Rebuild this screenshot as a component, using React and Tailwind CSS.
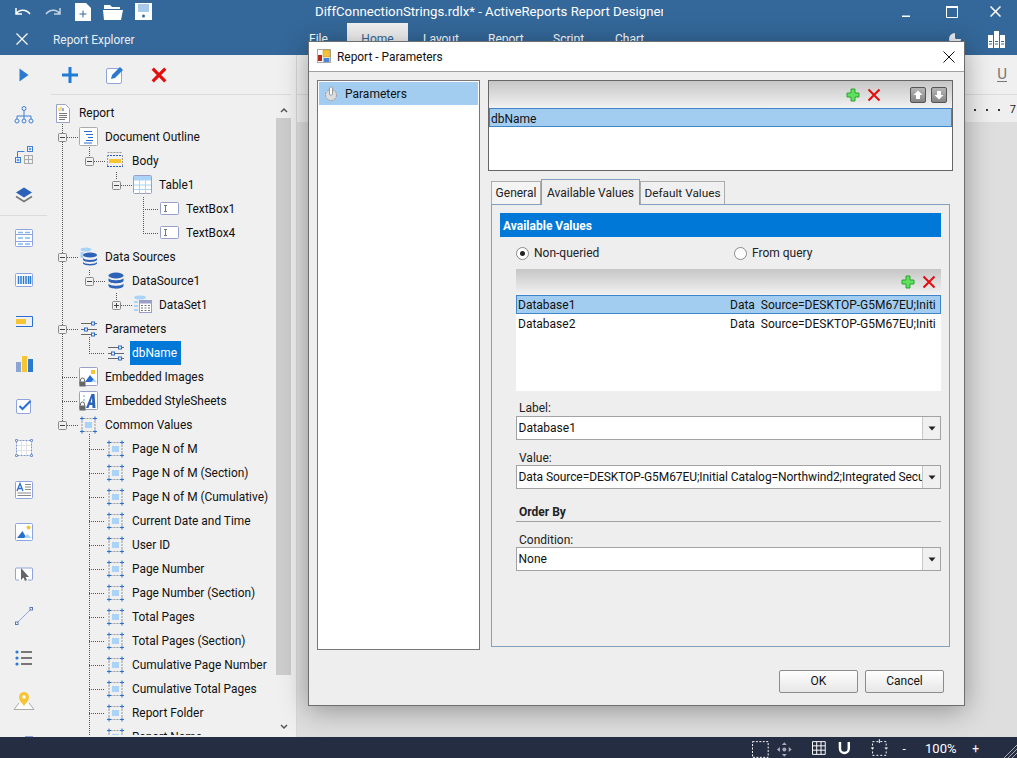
import React from 'react';

const FONT = 'font-["Roboto","Liberation_Sans",sans-serif]';

// tree data: level, label, icon
const TREE = [
  [0, 'Report', 'report'],
  [1, 'Document Outline', 'outline'],
  [2, 'Body', 'body'],
  [3, 'Table1', 'table'],
  [4, 'TextBox1', 'textbox'],
  [4, 'TextBox4', 'textbox'],
  [1, 'Data Sources', 'sources'],
  [2, 'DataSource1', 'db'],
  [3, 'DataSet1', 'dataset'],
  [1, 'Parameters', 'params'],
  [2, 'dbName', 'params', true],
  [1, 'Embedded Images', 'images'],
  [1, 'Embedded StyleSheets', 'sheets'],
  [1, 'Common Values', 'common'],
  [2, 'Page N of M', 'common'],
  [2, 'Page N of M (Section)', 'common'],
  [2, 'Page N of M (Cumulative)', 'common'],
  [2, 'Current Date and Time', 'common'],
  [2, 'User ID', 'common'],
  [2, 'Page Number', 'common'],
  [2, 'Page Number (Section)', 'common'],
  [2, 'Total Pages', 'common'],
  [2, 'Total Pages (Section)', 'common'],
  [2, 'Cumulative Page Number', 'common'],
  [2, 'Cumulative Total Pages', 'common'],
  [2, 'Report Folder', 'common'],
  [2, 'Report Name', 'common'],
];

const INDENT = ['pl-[6px]', 'pl-[32px]', 'pl-[59px]', 'pl-[86px]', 'pl-[113px]'];

function Lock() {
  return (
    <g>
      <path d="M1.5 14.5v-1.5a2 2 0 0 1 4 0v1.5" fill="none" stroke="#666" strokeWidth="1" />
      <rect x="0.5" y="14.5" width="6" height="5" fill="#666" />
    </g>
  );
}

function TreeIcon({ name }) {
  const common = { width: 20, height: 20, viewBox: '0 0 20 20' };
  switch (name) {
    case 'report':
      return (
        <svg {...common}>
          <path d="M3.5 1.5h9l4 4v14h-13z" fill="#fff" stroke="#9aa3c7" />
          <path d="M6 8V5M8 8V3.5" stroke="#f5c33b" strokeWidth="1.2" />
          <path d="M10 8V5" stroke="#3f7fd6" strokeWidth="1.2" />
          <path d="M6 10.5h8M6 12.5h8M6 14.5h8M6 16.5h6" stroke="#777" />
        </svg>
      );
    case 'outline':
      return (
        <svg {...common}>
          <rect x="0.5" y="0.5" width="18" height="18" rx="1" fill="#fff" stroke="#aaa" />
          <path d="M5 4.5h8M7 7.5h7M9 10.5h5M7 13.5h7M5 16h8" stroke="#2a6fd0" strokeWidth="1" />
        </svg>
      );
    case 'body':
      return (
        <svg {...common}>
          <path d="M1 4.5h16M1 15.5h16" stroke="#2a5fc0" strokeDasharray="2 1" />
          <path d="M1.5 1.5h15" stroke="#999" strokeDasharray="2 1" />
          <path d="M1.5 4v12M16.5 4v12" stroke="#999" strokeDasharray="2 1" />
          <rect x="3" y="8" width="12" height="4" fill="#f7c533" />
        </svg>
      );
    case 'table':
      return (
        <svg {...common}>
          <rect x="0.5" y="0.5" width="18" height="18" rx="1" fill="#fff" stroke="#9a9fc8" />
          <rect x="1" y="1" width="17" height="4.5" fill="#a9d3f7" />
          <path d="M1 10h17M1 14.5h17M6.5 5.5v13M12.5 5.5v13" stroke="#a9d3f7" />
        </svg>
      );
    case 'textbox':
      return (
        <svg {...common}>
          <rect x="0.5" y="3.5" width="18" height="12" rx="1" fill="#fff" stroke="#9a9fc8" />
          <path d="M4 6.5h3M4 12.5h3M5.5 6.5v6" stroke="#777" />
        </svg>
      );
    case 'db':
      return (
        <svg {...common}>
          <ellipse cx="10" cy="4.5" rx="7.5" ry="3" fill="#2c62b8" />
          <path d="M2.5 7c1 3 14 3 15 0v3c-1 3-14 3-15 0z" fill="#2c62b8" />
          <path d="M2.5 12.5c1 3 14 3 15 0v2.5c-1 3.5-14 3.5-15 0z" fill="#2c62b8" />
        </svg>
      );
    case 'sources':
      return (
        <svg {...common}>
          <ellipse cx="7" cy="2.5" rx="5.5" ry="2" fill="#a9d3f7" />
          <path d="M1.5 5v6h3V5z" fill="#a9d3f7" />
          <ellipse cx="11" cy="8" rx="7" ry="2.5" fill="#2c62b8" />
          <path d="M4 11c1 2.5 13 2.5 14 0v2c-1 2.5-13 2.5-14 0z" fill="#2c62b8" />
          <path d="M4 15c1 2.5 13 2.5 14 0v1.500c-1 2.500-13 2.500-14 0z" fill="#2c62b8" />
        </svg>
      );
    case 'dataset':
      return (
        <svg {...common}>
          <ellipse cx="7" cy="2.5" rx="6" ry="2" fill="#a9d3f7" />
          <path d="M1 6h4v2H1zM1 10h4v2H1zM1 14h4v2H1z" fill="#a9d3f7" />
          <rect x="6.500" y="5.500" width="12" height="12" fill="#fff" stroke="#9a9fc8" />
          <rect x="7" y="6" width="11" height="2.500" fill="#9a9fc8" />
          <path d="M8 10.500h2M11.500 10.500h2M15 10.500h2M8 13h2M11.500 13h2M15 13h2M8 15.500h2M11.500 15.500h2M15 15.500h2" stroke="#777" />
        </svg>
      );
    case 'params':
      return (
        <svg {...common}>
          <path d="M2 4.500h10M16 4.500h2M2 10.500h3M9 10.500h9M2 15.500h10M16 15.500h2" stroke="#666" strokeWidth="1" />
          <rect x="12.500" y="3" width="3" height="3" fill="none" stroke="#2a6fd0" />
          <rect x="5.500" y="9" width="3" height="3" fill="none" stroke="#2a6fd0" />
          <rect x="12.500" y="14" width="3" height="3" fill="none" stroke="#2a6fd0" />
        </svg>
      );
    case 'images':
      return (
        <svg {...common}>
          <rect x="0.500" y="0.500" width="18" height="18" rx="1" fill="#fff" stroke="#9a9fc8" />
          <rect x="12" y="3" width="4" height="4" fill="#f7c533" />
          <path d="M6 15l5-7 6 7z" fill="#2a6fd0" />
          <path d="M12 15l3-3 3 3z" fill="#a9d3f7" />
          <Lock />
        </svg>
      );
    case 'sheets':
      return (
        <svg {...common}>
          <rect x="0.500" y="0.500" width="18" height="18" rx="1" fill="#fff" stroke="#9a9fc8" />
          <rect x="4" y="4" width="2" height="2" fill="#a9d3f7" />
          <rect x="4" y="8" width="2" height="2" fill="#a9d3f7" />
          <path d="M7 17L12.500 3H15.500L16.500 17H13.500L13.300 14H10.600L9.500 17ZM11.500 11.500H13.200L13 6.500Z" fill="#2c62b8" />
          <Lock />
        </svg>
      );
    default:
      return (
        <svg {...common}>
          <path d="M4.500 3.500h10M4.500 16.500h10M3 6v8M16 6v8" stroke="#999" strokeDasharray="2 1" />
          <path d="M1 3.500h4M3 1.500v4M14 3.500h4M16 1.500v4M1 16.500h4M3 14.500v4M14 16.500h4M16 14.500v4" stroke="#2a6fd0" strokeWidth="1" />
          <rect x="6" y="7" width="7" height="6" fill="#a9d3f7" />
        </svg>
      );
  }
}

function Expander({ x, y, plus }) {
  return (
    <g>
      <rect x={x - 4} y={y - 4} width="8" height="8" rx="1" fill="#f0f0f0" stroke="#8a8a8a" />
      <path d={`M${x - 2.5} ${y}h5`} stroke="#444" />
      {plus && <path d={`M${x} ${y - 2.5}v5`} stroke="#444" />}
    </g>
  );
}

// dotted guide lines, drawn in page coordinates via the viewBox
function TreeLines() {
  const rowY = i => 113 + i * 24;
  const h = [
    [67, 78, 1], [67, 78, 6], [67, 78, 9], [67, 78, 13], [62, 78, 11], [62, 78, 12],
    [94, 105, 2], [94, 105, 7], [121, 132, 3], [121, 132, 8],
    [143, 159, 4], [143, 159, 5], [89, 105, 10],
    ...[14, 15, 16, 17, 18, 19, 20, 21, 22, 23, 24, 25, 26].map(i => [89, 105, i]),
  ];
  const v = [[62, 124, 425], [89, 147, 157], [89, 270, 276], [116, 172, 180], [116, 293, 300], [143, 197, 233], [89, 337, 353], [89, 434, 737]];
  return (
    <svg className="absolute left-0 top-0 pointer-events-none" width="229" height="640" viewBox="47 101 229 640">
      {h.map(([a, b, i]) => (
        <path key={`h${a}${i}`} d={`M${a} ${rowY(i) + 0.500}H${b}`} stroke="#555" strokeDasharray="1 1" />
      ))}
      {v.map(([x, a, b]) => (
        <path key={`v${x}${a}`} d={`M${x + 0.500} ${a}V${b}`} stroke="#555" strokeDasharray="1 1" />
      ))}
      {[[62, 137], [62, 257], [62, 329], [62, 425], [89, 161], [89, 281], [116, 185]].map(([x, y]) => (
        <Expander key={`${x}${y}`} x={x + 0.500} y={y + 0.500} />
      ))}
      <Expander x={116.500} y={305.500} plus />
    </svg>
  );
}

function Tree() {
  return (
    <div className="relative flex-1 overflow-hidden">
      <TreeLines />
      <div className="relative flex flex-col">
        {TREE.map(([level, label, icon, selected]) => (
          <div key={label} className={`flex h-6 shrink-0 items-center ${INDENT[level]}`}>
            <span className="flex w-[24px] shrink-0"><TreeIcon name={icon} /></span>
            <span className={`flex h-6 items-center whitespace-nowrap pl-[2px] pt-[2px] text-[11.9px] ${selected ? 'bg-[#0078d7] pr-[4px] text-white' : 'pr-[2px] text-[#111]'}`}>{label}</span>
          </div>
        ))}
      </div>
    </div>
  );
}

function Scrollbar() {
  return (
    <div className="flex w-[15px] shrink-0 flex-col bg-[#f0f0f0]">
      <div className="flex h-[17px] items-center justify-center">
        <svg width="8" height="6" viewBox="0 0 8 6"><path d="M1 5l3-3 3 3" fill="none" stroke="#555" strokeWidth="1.500" /></svg>
      </div>
      <div className="h-[557px] bg-[#cdcdcd]" />
      <div className="flex flex-1 items-end justify-center pb-[5px]">
        <svg width="8" height="6" viewBox="0 0 8 6"><path d="M1 1l3 3 3-3" fill="none" stroke="#555" strokeWidth="1.500" /></svg>
      </div>
    </div>
  );
}

const s = { fill: 'none', stroke: '#3f7fd6', strokeWidth: 1 };

const RAIL_ICONS = [
  <svg width="20" height="20" viewBox="0 0 20 20"><rect x="1.500" y="1.500" width="17" height="17" rx="1" fill="#fff" stroke="#8fa4dc" /><path d="M2 6.500h16M2 13.500h16" stroke="#8fa4dc" /><path d="M4 4.500h5M11 4.500h5M4 10h5M11 10h5M4 16h5M11 16h5" stroke="#7fb8ee" strokeWidth="1.500" /></svg>,
  <svg width="20" height="20" viewBox="0 0 20 20"><rect x="1.500" y="3.500" width="17" height="13" rx="1" fill="#fff" stroke="#8fa4dc" /><path d="M4.500 6v8M7 6v8M9.500 6v8M12 6v8M14.500 6v8M16.500 6v8" stroke="#2a7ad0" strokeWidth="1.500" /></svg>,
  <svg width="20" height="20" viewBox="0 0 20 20"><path d="M2 4.500h16.500v10H2" fill="none" stroke="#2a6fd0" /><rect x="2" y="7" width="10" height="5" fill="#f7c533" /></svg>,
  <svg width="20" height="20" viewBox="0 0 20 20"><rect x="2" y="8" width="5" height="10" fill="#8aa5d6" /><rect x="8" y="2" width="5" height="16" fill="#f7c533" /><rect x="14" y="5" width="5" height="13" fill="#2a7ad0" /></svg>,
  <svg width="20" height="20" viewBox="0 0 20 20"><rect x="2.500" y="3.500" width="14" height="14" rx="1.500" fill="#fff" stroke="#8fa4dc" /><path d="M5.500 10l3 3 8-8" fill="none" stroke="#2a6fd0" strokeWidth="2" /></svg>,
  <svg width="20" height="20" viewBox="0 0 20 20"><rect x="2.500" y="2.500" width="15" height="15" fill="#fff" stroke="#7b93d0" strokeDasharray="2 1" /><path d="M7.500 3v14M12.500 3v14M3 7.500h14M3 12.500h14" stroke="#e2e2e2" /><path d="M1.500 1.500h2v2h-2zM16.500 1.500h2v2h-2zM1.500 16.500h2v2h-2zM16.500 16.500h2v2h-2z" fill="#fff" stroke="#7b93d0" /></svg>,
  <svg width="20" height="20" viewBox="0 0 20 20"><rect x="1.500" y="1.500" width="17" height="17" rx="1" fill="#fff" stroke="#8fa4dc" /><path d="M3 11L6 3.500 9 11M4.200 8.500h3.600" fill="none" stroke="#2a6fd0" strokeWidth="1.300" /><path d="M11 4.500h6M11 7h6M11 9.500h6M3.500 13h13.500M3.500 15.500h13.500" stroke="#888" /></svg>,
  <svg width="20" height="20" viewBox="0 0 20 20"><rect x="1.500" y="1.500" width="17" height="17" rx="1" fill="#fff" stroke="#8fa4dc" /><circle cx="14.500" cy="5.500" r="2" fill="#f7c533" /><path d="M3 16l5.500-7 4 7z" fill="#2a6fd0" /><path d="M10 16l3.500-4 4 4z" fill="#a9d3f7" /></svg>,
  <svg width="20" height="20" viewBox="0 0 20 20"><path d="M5 16H2.500a1 1 0 0 1-1-1V5a1 1 0 0 1 1-1h15a1 1 0 0 1 1 1v10a1 1 0 0 1-1 1H14" fill="#fff" stroke="#8fa4dc" /><path d="M7 4v12l2.500-2.500L11 17l2-1-1.500-3H15z" fill="#666" /></svg>,
  <svg width="20" height="20" viewBox="0 0 20 20"><path d="M3.500 16.500L16.500 3.500" stroke="#8fa4dc" /><rect x="1.500" y="16" width="2.500" height="2.500" fill="#fff" stroke="#5a78b8" /><rect x="16" y="1.500" width="2.500" height="2.500" fill="#fff" stroke="#5a78b8" /></svg>,
  <svg width="20" height="20" viewBox="0 0 20 20"><circle cx="3" cy="4" r="1.600" fill="#2a7ad0" /><circle cx="3" cy="10" r="1.600" fill="#2a7ad0" /><circle cx="3" cy="16" r="1.600" fill="#2a7ad0" /><path d="M7 4h11M7 10h11M7 16h11" stroke="#777" strokeWidth="2" /></svg>,
  <svg width="22" height="20" viewBox="0 0 22 20"><path d="M6 13L1 19.500h20L16 13" fill="#fff" stroke="#aaa" /><path d="M11 16c-3-4-5-6-5-9a5 5 0 0 1 10 0c0 3-2 5-5 9z" fill="#f7c533" /><circle cx="11" cy="7" r="1.800" fill="#fff" /></svg>,
  <svg width="20" height="20" viewBox="0 0 20 20"><path d="M2 14l4-8 4 8" fill="none" stroke="#8fa4dc" /><rect x="11.500" y="4.500" width="7" height="11" fill="#fff" stroke="#8fa4dc" /></svg>,
];

function Rail() {
  return (
    <div className="flex w-[47px] shrink-0 flex-col items-center overflow-hidden">
      <div className="flex h-10 w-full shrink-0 items-center justify-center">
        <svg width="10" height="14" viewBox="0 0 10 14"><path d="M0.500 0.500v13l9-6.500z" fill="#2a7ad0" /></svg>
      </div>
      <div className="flex h-10 w-full shrink-0 items-center justify-center">
        <svg width="20" height="20" viewBox="0 0 20 20" {...s}>
          <circle cx="10" cy="3.500" r="2" /><circle cx="3" cy="16" r="2" /><circle cx="10" cy="16" r="2" /><circle cx="17" cy="16" r="2" />
          <path d="M10 5.500V14M3 14v-3h14v3" />
        </svg>
      </div>
      <div className="flex h-10 w-full shrink-0 items-center justify-center">
        <svg width="20" height="20" viewBox="0 0 20 20">
          <path d="M3.500 12V6.500h7" fill="none" stroke="#3f7fd6" />
          <rect x="13.500" y="1.500" width="5" height="5" fill="#fff" stroke="#3f7fd6" /><path d="M14.500 4h3M16 2.500v3" stroke="#3f7fd6" />
          <rect x="1.500" y="12.500" width="5" height="5" fill="#fff" stroke="#3f7fd6" /><path d="M2.500 15h3M4 13.500v3" stroke="#3f7fd6" />
          <rect x="10.500" y="10.500" width="8" height="8" fill="none" stroke="#aaa" /><path d="M14.500 10.500v8M10.500 14.500h8" stroke="#aaa" />
        </svg>
      </div>
      <div className="flex h-10 w-full shrink-0 items-center justify-center">
        <svg width="20" height="18" viewBox="0 0 20 18">
          <path d="M2 10.500l8 5 8-5" fill="none" stroke="#777" strokeWidth="1.500" />
          <path d="M10 1.500l8 5-8 5-8-5z" fill="#2c62b8" />
        </svg>
      </div>
      <div className="mb-[1px] h-[1px] w-full shrink-0 bg-[#dcdcdc]" />
      {RAIL_ICONS.map((icon, i) => (
        <div key={i} className="flex h-[42px] w-full shrink-0 items-center justify-center">{icon}</div>
      ))}
    </div>
  );
}

function RedX({ size = 14, width = 2 }) {
  return (
    <svg width={size} height={size} viewBox="0 0 14 14">
      <path d="M1.500 1.500L12.500 12.500M12.500 1.500L1.500 12.500" stroke="#e30d0d" strokeWidth={width} />
    </svg>
  );
}

function GreenPlus() {
  return (
    <svg width="14" height="14" viewBox="0 0 14 14">
      <path d="M5 1h4v4h4v4H9v4H5V9H1V5h4z" fill="#5fe05f" stroke="#2ca52c" />
    </svg>
  );
}

function MoveButton({ down }) {
  return (
    <div className="flex h-[16px] w-[16px] items-center justify-center rounded-[2px] border border-[#555] bg-gradient-to-b from-[#b5b5b5] to-[#858585]">
      <svg width="10" height="10" viewBox="0 0 10 10">
        <path d={down ? 'M3 1h4v4h2.500L5 9.500.5 5H3z' : 'M3 9h4V5h2.500L5 .5.500 5H3z'} fill="#fff" />
      </svg>
    </div>
  );
}

function Combo({ value, tight }) {
  return (
    <div className="flex h-[24px] border border-[#a3a3a3] bg-white text-[12px] text-[#111]">
      <div className={`flex flex-1 items-center overflow-hidden whitespace-nowrap pl-[1.500px] ${tight ? 'tracking-[-0.08px]' : ''}`}>{value}</div>
      <div className="flex w-[18px] shrink-0 items-center justify-center border-l border-[#c8c8c8] bg-[#f0f0f0]">
        <svg width="8" height="5" viewBox="0 0 8 5"><path d="M0.500 0.500h7L4 4.500z" fill="#222" /></svg>
      </div>
    </div>
  );
}

function Radio({ checked, label }) {
  return (
    <div className="flex items-center gap-[5px]">
      <span className="flex h-[13px] w-[13px] items-center justify-center rounded-full border border-[#8a8a8a] bg-white">
        {checked && <span className="h-[5px] w-[5px] rounded-full bg-[#222]" />}
      </span>
      <span className="text-[12px] text-[#222]">{label}</span>
    </div>
  );
}

function DialogButton({ children }) {
  return (
    <button className="flex h-[23px] w-[79px] items-center justify-center rounded-[2px] border border-[#8c8c8c] bg-gradient-to-b from-white to-[#e6e6e6] pb-[1px] text-[12px] text-[#111]">
      {children}
    </button>
  );
}

function Dialog() {
  return (
    <div className="absolute left-[308px] top-[41px] flex h-[665px] w-[657px] flex-col border border-[#6e6e6e] bg-[#eeeeee] shadow-[0_4px_26px_rgba(0,0,0,0.35)]">
      <div className="flex h-[30px] shrink-0 items-center justify-between border-b border-[#a0a0a0] bg-white pl-[8px] pr-[9px]">
        <div className="flex items-center gap-[6px]">
          <svg width="14" height="14" viewBox="0 0 14 14">
            <rect x="0.500" y="0.500" width="13" height="13" fill="#fff" stroke="#aaa" />
            <rect x="6" y="1" width="7" height="7" fill="#f5c33b" stroke="#b08a1a" strokeWidth="0.500" />
            <rect x="1" y="6" width="4" height="6" fill="#b32a1a" />
            <rect x="6.500" y="9" width="6" height="4" fill="#4a86d8" />
          </svg>
          <span className="pt-[2px] text-[11.9px] text-[#111]">Report - Parameters</span>
        </div>
        <svg width="12" height="12" viewBox="0 0 12 12"><path d="M.5.500l11 11M11.500.500l-11 11" stroke="#111" /></svg>
      </div>

      <div className="flex flex-1 gap-[8px] pl-[8px] pr-[11px] pt-[8px]">
        <div className="flex h-[570px] w-[163px] shrink-0 flex-col border border-[#777] bg-white p-[1px] pb-0">
          <div className="flex h-[23px] items-center gap-[7px] bg-[#a3cdf0] pl-[5px]">
            <svg width="14" height="16" viewBox="0 0 14 16">
              <circle cx="7" cy="9" r="5.500" fill="#ddd" stroke="#999" strokeDasharray="2 1" />
              <rect x="5.500" y="1" width="3" height="8" rx="1" fill="#fff" stroke="#999" />
            </svg>
            <span className="text-[12px] text-[#111]">Parameters</span>
          </div>
        </div>

        <div className="flex flex-1 flex-col">
          <div className="flex h-[91px] shrink-0 flex-col border border-[#666] bg-white">
            <div className="flex h-[27px] shrink-0 items-center bg-gradient-to-b from-[#c6c6c6] to-[#f2f2f2] pr-[5px]">
              <div className="ml-auto flex items-center gap-[7px]"><GreenPlus /><RedX /></div>
              <div className="ml-[29px] flex gap-[5px]"><MoveButton /><MoveButton down /></div>
            </div>
            <div className="flex h-[19px] shrink-0 items-center border border-[#3f86c8] bg-[#a3cdf0] pl-[1px] pt-[2px] text-[12px] text-[#111]">dbName</div>
          </div>

          <div className="ml-[3px] mt-[8px] flex h-[25px] items-end text-[12px] text-[#222]">
            <div className="flex h-[23px] w-[50px] items-center justify-center border border-b-0 border-[#acacac] bg-[#f4f4f4]">General</div>
            <div className="relative z-10 -mb-[1px] flex h-[26px] w-[99px] items-center justify-center border border-b-0 border-[#84a0bc] bg-[#eeeeee]">Available Values</div>
            <div className="flex h-[23px] w-[85px] items-center justify-center whitespace-nowrap border border-b-0 border-[#acacac] bg-[#f0f0f0] pt-[1px] text-[11.8px]">Default Values</div>
          </div>

          <div className="ml-[3px] flex h-[443px] w-[459px] flex-col border border-[#84a0bc] px-[8px] pt-[8px]">
            <div className="flex h-[24px] shrink-0 items-center bg-[#0078d7] pl-[3px] pt-[1px] text-[12px] font-bold text-white">Available Values</div>
            <div className="flex h-[32px] shrink-0 items-center pl-[16px]">
              <div className="w-[218px]"><Radio checked label="Non-queried" /></div>
              <Radio label="From query" />
            </div>
            <div className="ml-[16px] flex h-[122px] shrink-0 flex-col bg-white">
              <div className="flex h-[26px] shrink-0 items-center justify-end gap-[7px] bg-gradient-to-b from-[#c6c6c6] to-[#f2f2f2] pr-[5px]"><GreenPlus /><RedX /></div>
              <div className="flex h-[19px] shrink-0 items-center overflow-hidden whitespace-nowrap border border-[#3f86c8] bg-[#a3cdf0] pl-[1px] text-[12px] text-[#111]">
                <span className="w-[212px] shrink-0">Database1</span>
                <span className="whitespace-pre">Data  Source=DESKTOP-G5M67EU;Initi</span>
              </div>
              <div className="flex h-[19px] shrink-0 items-center overflow-hidden whitespace-nowrap pl-[2px] text-[12px] text-[#111]">
                <span className="w-[212px] shrink-0">Database2</span>
                <span className="whitespace-pre">Data  Source=DESKTOP-G5M67EU;Initi</span>
              </div>
            </div>
            <div className="ml-[16px] flex flex-col text-[12px] text-[#222]">
              <div className="flex h-[25px] items-end pb-[2px] pl-[3px] leading-[12px]">Label:</div>
              <Combo value="Database1" />
              <div className="flex h-[25px] items-end pb-[1px] pl-[3px] leading-[12px]">Value:</div>
              <Combo tight value="Data Source=DESKTOP-G5M67EU;Initial Catalog=Northwind2;Integrated Security=True" />
              <div className="mt-[12px] flex h-[21px] items-center border-b border-[#a3a3a3] pl-[3px] pt-[1px] font-bold">Order By</div>
              <div className="flex h-[25px] items-end pb-[1px] pl-[3px] leading-[12px]">Condition:</div>
              <Combo value="None" />
            </div>
          </div>

          <div className="mt-[23px] flex justify-end gap-[7px] pr-[9px]">
            <DialogButton>OK</DialogButton>
            <DialogButton>Cancel</DialogButton>
          </div>
        </div>
      </div>
    </div>
  );
}

function Header() {
  return (
    <div className="relative flex h-[55px] shrink-0 flex-col bg-[#34689a] text-white">
      <div className="flex h-[23px] items-center">
        <div className="flex w-[315px] shrink-0 items-center pl-[15px]">
          <svg width="16" height="10" viewBox="0 0 16 10" className="mr-[14px]"><path d="M1 1v6h6M1.500 6.500C4 2.500 11 1.500 15 7" fill="none" stroke="#fff" strokeWidth="1.500" /></svg>
          <svg width="16" height="10" viewBox="0 0 16 10" className="mr-[14px]"><path d="M15 1v6H9M14.500 6.500C12 2.500 5 1.500 1 7" fill="none" stroke="#c5d3e2" strokeWidth="1.500" /></svg>
          <svg width="16" height="18" viewBox="0 0 16 18" className="mr-[12px]"><path d="M0 0h11l5 5v13H0z" fill="#fff" /><path d="M4.500 11h7M8 7.500v7" stroke="#34689a" /></svg>
          <svg width="20" height="17" viewBox="0 0 20 17" className="mr-[12px]"><path d="M1 6V2h6l2 2h8v2z" fill="#fff" /><path d="M0 7h20l-2 10H1z" fill="#fff" /></svg>
          <svg width="17" height="17" viewBox="0 0 17 17"><path d="M0 0h17v17H0z" fill="#fff" /><rect x="3" y="1" width="11" height="8" fill="#a9c9ea" /><circle cx="8.500" cy="13" r="1.500" fill="#34689a" /></svg>
        </div>
        <div className="w-[348px] overflow-hidden whitespace-nowrap text-[13.2px]">DiffConnectionStrings.rdlx* - ActiveReports Report Designer</div>
        <div className="ml-auto flex items-center pr-[16px]">
          <svg width="8" height="10" viewBox="0 0 8 10" className="mr-[36px]"><path d="M0 8.500h8v2H0z" fill="#fff" /></svg>
          <svg width="12" height="12" viewBox="0 0 12 12" className="mr-[32px]"><path d="M.5 1.500h11v10H.5z" fill="none" stroke="#fff" /><path d="M0 1h12" stroke="#fff" strokeWidth="2" /></svg>
          <svg width="11" height="11" viewBox="0 0 11 11"><path d="M.5.500l10 10M10.500.500l-10 10" stroke="#fff" strokeWidth="1.500" /></svg>
        </div>
      </div>
      <div className="flex flex-1 items-center">
        <svg width="12" height="12" viewBox="0 0 12 12" className="ml-[16px]"><path d="M.5.500l11 11M11.500.500l-11 11" stroke="#fff" strokeWidth="1.200" /></svg>
        <span className="ml-[25px] w-[256px] pt-[3px] text-[11.9px] text-[#e8eef5]">Report Explorer</span>
        <div className="flex h-full w-[99px] shrink-0 items-center text-[12px]">
          <span className="w-[38px]">File</span>
          <span className="flex h-full w-[61px] items-center justify-center bg-[#f0f0f0] text-[#34689a]">Home</span>
        </div>
        <span className="ml-[15px] w-[65px] text-[12px]">Layout</span>
        <span className="w-[65px] text-[12px]">Report</span>
        <span className="w-[62px] text-[12px]">Script</span>
        <span className="text-[12px]">Chart</span>
        <div className="ml-auto mr-[12px] flex items-center gap-[27px]">
          <svg width="12" height="12" viewBox="0 0 12 12"><path d="M6 0a6 6 0 1 0 6 6H7.500A1.500 1.500 0 0 1 6 4.500z" fill="#e8eef5" /></svg>
          <svg width="17" height="18" viewBox="0 0 17 18"><path d="M0 5h5v13H0zM6 1h5v17H6zM12 5h5v13h-5z" fill="#fff" /><path d="M1 11.500h3M1 14h3M7 11.500h3M7 14h3M13 11.500h3M13 14h3" stroke="#34689a" /></svg>
        </div>
      </div>
    </div>
  );
}

function StatusBar() {
  return (
    <div className="flex h-[21px] shrink-0 items-center overflow-hidden bg-[#252d43] pl-[752px] text-white">
      <svg width="17" height="17" viewBox="0 0 17 17" className="mt-[3px]"><rect x="0.500" y="0.500" width="16" height="16" fill="none" stroke="#fff" strokeDasharray="2 1.500" /></svg>
      <svg width="17" height="17" viewBox="0 0 17 17" className="ml-[7px] mt-[3px]"><path d="M8.500 1l2.500 3H6zM8.500 16L6 13h5zM1 8.500L4 6v5zM16 8.500L13 11V6z" fill="#aab" /><circle cx="8.500" cy="8.500" r="2" fill="#aab" /></svg>
      <svg width="14" height="14" viewBox="0 0 14 14" className="ml-[20px]"><path d="M.5.500h13v13H.5zM.5 4.800h13M.5 9.200h13M4.800.5v13M9.200.5v13" fill="none" stroke="#fff" /></svg>
      <svg width="13" height="14" viewBox="0 0 13 14" className="ml-[12px]"><path d="M2 1v6.500a4.500 4.500 0 0 0 9 0V1" fill="none" stroke="#fff" strokeWidth="2.500" /></svg>
      <svg width="17" height="17" viewBox="0 0 17 17" className="ml-[20px]"><rect x="1.500" y="2.500" width="14" height="14" fill="none" stroke="#fff" strokeDasharray="2 2" /><path d="M8.500 0v4M0 9h3M14 9h3" stroke="#fff" /></svg>
      <span className="ml-[15px] w-[23px] pt-[2px] text-[12px]">-</span>
      <span className="w-[48px] pt-[2px] text-[13px]">100%</span>
      <span className="pt-[2px] text-[12px]">+</span>
      <svg width="13" height="13" viewBox="0 0 13 13" className="ml-[25px] mt-[8px] shrink-0"><path d="M0 13L13 0M4 13L13 4M8 13l5-5" stroke="#aaa" /></svg>
    </div>
  );
}

export default function App() {
  return (
    <div className={`relative flex h-[758px] w-[1017px] flex-col overflow-hidden bg-[#f0f0f0] ${FONT}`}>
      <Header />
      <div className="flex min-h-0 flex-1">
        <Rail />
        <div className="flex w-[244px] shrink-0 flex-col pb-[2px]">
          <div className="ml-[4px] flex h-[40px] shrink-0 items-center border-b border-[#dcdcdc] pl-[11px]">
            <svg width="16" height="16" viewBox="0 0 16 16"><path d="M8 0v16M0 8h16" stroke="#1f7bd6" strokeWidth="3" /></svg>
            <svg width="18" height="18" viewBox="0 0 18 18" className="ml-[28px]"><rect x="0.500" y="2.500" width="15" height="15" rx="1.500" fill="#fff" stroke="#8fa4dc" /><path d="M5 13l1-4 8-8 3 3-8 8z" fill="#2a7ad0" /></svg>
            <span className="ml-[27px] flex"><RedX size={16} width={2.800} /></span>
          </div>
          <div className="flex min-h-0 flex-1 pt-[6px]">
            <Tree />
            <Scrollbar />
          </div>
        </div>
        <div className="w-[6px] shrink-0 border-r border-[#d8d8d8] bg-[#f0f0f0]" />
        <div className="flex flex-1 flex-col">
          <div className="flex h-[40px] shrink-0 items-center justify-end border-b border-[#dcdcdc] pr-[10px]">
            <span className="border-b border-[#777] text-[15px] leading-[14px] text-[#777]">U</span>
          </div>
          <div className="flex h-[27px] shrink-0 items-center justify-end gap-[10px] bg-[#efefef] pr-[1px] pt-[3px] text-[11px] text-[#222]">
            <span className="h-[2px] w-[2px] bg-[#333]" />
            <span className="h-[2px] w-[2px] bg-[#333]" />
            <span className="h-[2px] w-[2px] bg-[#333]" />
            <span className="h-[2px] w-[2px] bg-[#333]" />
            <span>7</span>
          </div>
          <div className="flex-1 bg-[#dedede]" />
        </div>
      </div>
      <StatusBar />
      <Dialog />
    </div>
  );
}
